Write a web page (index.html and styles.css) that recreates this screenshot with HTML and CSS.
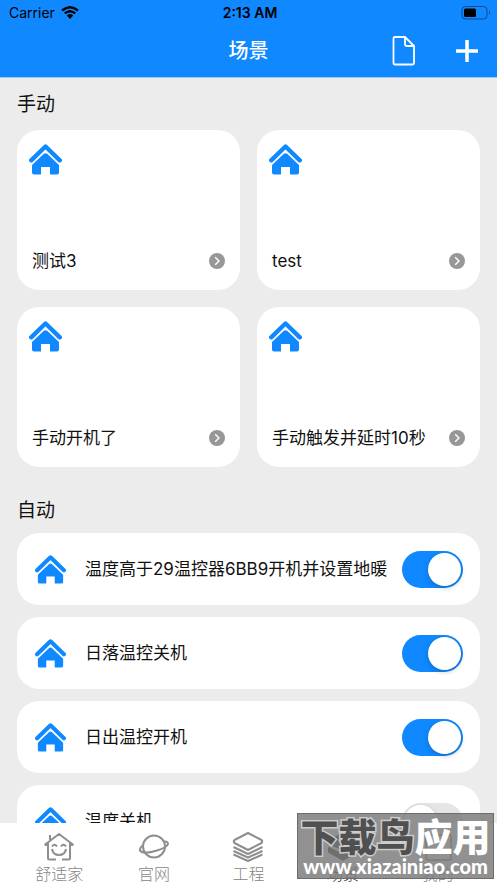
FILE: index.html
```html
<!DOCTYPE html>
<html lang="zh-CN">
<head>
<meta charset="utf-8">
<meta name="viewport" content="width=device-width, initial-scale=1">
<title>场景</title>
<link rel="stylesheet" href="styles.css">
</head>
<body>
<svg class="sprite" aria-hidden="true">
  <symbol id="house" viewBox="0 0 33 31">
    <path d="M2.200 16.300 16.500 2.500 30.800 16.300" fill="none" stroke="currentColor" stroke-width="4.400" stroke-linecap="round" stroke-linejoin="round"/>
    <path d="M3 21 14.800 9.800Q16.500 8.500 18.200 9.800L30 21V28.500Q30 30.500 28 30.500H21V23H12V30.500H5Q3 30.500 3 28.500Z" fill="currentColor"/>
  </symbol>
  <symbol id="go" viewBox="0 0 16 16">
    <circle cx="8" cy="8" r="8" fill="#979797"/>
    <path d="m6.200 4.200 3.800 3.800-3.800 3.800" fill="none" stroke="#fff" stroke-width="1.400"/>
  </symbol>
</svg>
<div class="app">
  <header class="top">
    <div class="status">
      <span class="carrier">Carrier
        <svg width="18" height="13" viewBox="0 0 18 13" fill="none" stroke="#000" stroke-width="2.300"><path d="M1 4.500Q9-2 17 4.500M3.800 7.400Q9 3 14.200 7.400"/><path d="M5.800 9.400Q9 6.800 12.200 9.400L9 13Z" fill="#000" stroke="none"/></svg>
      </span>
      <span class="clock">2:13 AM</span>
      <svg class="battery" width="30" height="14" viewBox="0 0 30 14"><rect x="1" y=".5" width="25" height="12.500" rx="3.500" fill="none" stroke="#0a4c8e"/><rect x="3" y="2.500" width="12" height="8.500" rx="1.500"/><path d="M28 4.500q2 2.200 0 4.500z" fill="#0a4c8e"/></svg>
    </div>
    <div class="nav">
      <h1>场景</h1>
      <div class="actions">
        <button type="button" aria-label="记录"><svg width="24" height="30" viewBox="0 0 24 30" fill="none" stroke="#fff" stroke-width="1.800" stroke-linejoin="round"><path d="M3 1H13L22 10V27Q22 28.500 20.500 28.500H3Q1.500 28.500 1.500 27V2.500Q1.500 1 3 1ZM13 1V8.500Q13 10 14.500 10H22"/></svg></button>
        <button type="button" aria-label="添加"><svg width="22" height="22" viewBox="0 0 22 22" stroke="#fff" stroke-width="3.500"><path d="M11 0V22M0 11H22"/></svg></button>
      </div>
    </div>
  </header>
  <main>
    <h2>手动</h2>
    <div class="tiles">
      <a class="tile" href="#"><svg class="house"><use href="#house"/></svg><span class="caption">测试3<svg class="go"><use href="#go"/></svg></span></a>
      <a class="tile" href="#"><svg class="house"><use href="#house"/></svg><span class="caption">test<svg class="go"><use href="#go"/></svg></span></a>
      <a class="tile" href="#"><svg class="house"><use href="#house"/></svg><span class="caption">手动开机了<svg class="go"><use href="#go"/></svg></span></a>
      <a class="tile" href="#"><svg class="house"><use href="#house"/></svg><span class="caption">手动触发并延时10秒<svg class="go"><use href="#go"/></svg></span></a>
    </div>
    <h2 class="second">自动</h2>
    <div class="rows">
      <label class="row"><svg class="house"><use href="#house"/></svg><span>温度高于29温控器6BB9开机并设置地暖</span><input type="checkbox" role="switch" checked></label>
      <label class="row"><svg class="house"><use href="#house"/></svg><span>日落温控关机</span><input type="checkbox" role="switch" checked></label>
      <label class="row"><svg class="house"><use href="#house"/></svg><span>日出温控开机</span><input type="checkbox" role="switch" checked></label>
      <label class="row"><svg class="house"><use href="#house"/></svg><span>温度关机</span><input type="checkbox" role="switch"></label>
    </div>
  </main>
  <nav class="tabs">
    <a href="#"><svg viewBox="0 0 32 30"><path d="M5 11V26Q5 27.500 6.500 27.500H13M27 11V26Q27 27.500 25.500 27.500H19M1.500 13 16 2 30.500 13M7 8V3M5 13H2M27 13H30M9 14.500q2.500-3.500 5 0M18 14.500q2.500-3.500 5 0M9 17Q10 23 16 23T23 17"/></svg>舒适家</a>
    <a href="#"><svg viewBox="0 0 32 30"><circle cx="16" cy="14.500" r="11"/><path d="M5.500 13Q1.500 15.500 2 18.500C4 22 14 20 19 18.500S29 15 30 12Q30 9 25.500 9.500"/></svg>官网</a>
    <a href="#"><svg viewBox="0 0 32 30"><path d="M16 1 29.500 8Q31 9.500 29.500 11L16 18 2.500 11Q1 9.500 2.500 8ZM1.500 15 16 22 30.500 15M1.500 19 16 25.500 30.500 19M1.500 22.500 16 29 30.500 22.500"/></svg>工程</a>
    <a class="active" href="#"><svg viewBox="0 0 32 30"><path d="M16 1.500 30 9V11L16 18 2 11V9ZM2 16 16 23 30 16V20L16 28 2 20Z"/></svg>场景</a>
    <a href="#"><svg viewBox="0 0 32 30"><rect x="4" y="3" width="25" height="25" rx="2"/><path d="M19 19H25"/></svg>我的</a>
  </nav>
  <div class="watermark"><div class="brand"><span>下载鸟</span>应用</div><div class="site">www.xiazainiao.com</div></div>
</div>
</body>
</html>
```
FILE: styles.css
```css
* { box-sizing: border-box; }
body {
  margin: 0;
  font-family: Inter, "Noto Sans CJK SC", sans-serif;
  color: #111;
}
.sprite { position: absolute; width: 0; height: 0; }
h1, h2 { margin: 0; font-weight: 400; }
a { color: inherit; text-decoration: none; }
svg { display: block; flex: none; }
.app {
  position: relative;
  display: flex;
  flex-direction: column;
  height: 100vh;
  overflow: hidden;
  background: #ececec;
}
.top { flex: none; background: #1088ff; border-bottom: 1px solid #a5c9ee; }
.status {
  display: grid;
  grid-template-columns: 1fr auto 1fr;
  align-items: center;
  height: 25px;
  padding: 0 6px 0 9px;
  font-size: 14px;
  color: #000;
}
.carrier { display: flex; align-items: center; gap: 6px; }
.clock { font-weight: 600; }
.battery { justify-self: end; }
.nav {
  display: grid;
  grid-template-columns: 1fr auto 1fr;
  align-items: center;
  height: 52px;
  padding: 0 19px;
}
.nav h1 { grid-column: 2; font-size: 20px; font-weight: 500; line-height: 28px; color: #fff; }
.actions { display: flex; align-items: center; justify-content: flex-end; gap: 40px; }
.actions button { padding: 0; border: 0; background: none; }
main { flex: 1; min-height: 0; overflow: hidden; padding: 12px 17px 0; }
h2 { font-size: 19px; line-height: 29px; }
h2.second { margin-top: 29px; }
.tiles { display: grid; grid-template-columns: 1fr 1fr; gap: 17px; margin-top: 11px; }
.tile {
  display: flex;
  flex-direction: column;
  justify-content: space-between;
  height: 160px;
  padding: 14px 15px 16px 12px;
  border-radius: 22px;
  background: #fff;
}
.tile .house { width: 33px; height: 31px; }
.house { color: #1088ff; }
.caption {
  display: flex;
  align-items: center;
  justify-content: space-between;
  padding-left: 3px;
  font-size: 17px;
  line-height: 26px;
}
.go { width: 16px; height: 16px; }
.rows { display: flex; flex-direction: column; gap: 12px; margin-top: 8px; }
.row {
  display: flex;
  align-items: center;
  height: 72px;
  padding: 0 17px 0 18px;
  border-radius: 22px;
  background: #fff;
  font-size: 17px;
  line-height: 26px;
  white-space: nowrap;
}
.row .house { width: 31px; height: 29px; margin-right: 19px; }
.row span { flex: 1; min-width: 0; }
.row input {
  appearance: none;
  flex: none;
  display: flex;
  width: 61px;
  height: 37px;
  margin: 0;
  padding: 2px;
  border-radius: 19px;
  background: #e5e5e8;
}
.row input::before {
  content: "";
  width: 33px;
  height: 33px;
  border-radius: 50%;
  background: #fff;
  box-shadow: 0 2px 5px #0003;
}
.row input:checked { justify-content: flex-end; background: #1088ff; }
.tabs {
  flex: none;
  display: flex;
  height: 60px;
  padding: 9px 12px 0;
  background: #fff;
}
.tabs a {
  flex: 1;
  display: flex;
  flex-direction: column;
  align-items: center;
  font-size: 16px;
  font-weight: 300;
  line-height: 24px;
  color: #868686;
}
.tabs svg {
  width: 32px;
  height: 30px;
  fill: none;
  stroke: #8e8e8e;
  stroke-width: 2;
  stroke-linejoin: round;
}
.tabs .active { color: #333; }
.tabs .active svg { fill: #222; stroke: #222; }
.watermark {
  position: absolute;
  right: 3px;
  bottom: 4px;
  width: 197px;
  height: 66px;
  border: 1px solid #6d6d6d;
  background: #7d7d7dd8;
  color: #fff;
  text-align: center;
  white-space: nowrap;
}
.brand { padding-top: 4px; font-size: 38px; font-weight: 900; line-height: 38px; }
.brand span { color: #505050; -webkit-text-stroke: 3px #ccc; paint-order: stroke fill; }
.site { font: 900 20px/20px Lato, sans-serif; }
```
